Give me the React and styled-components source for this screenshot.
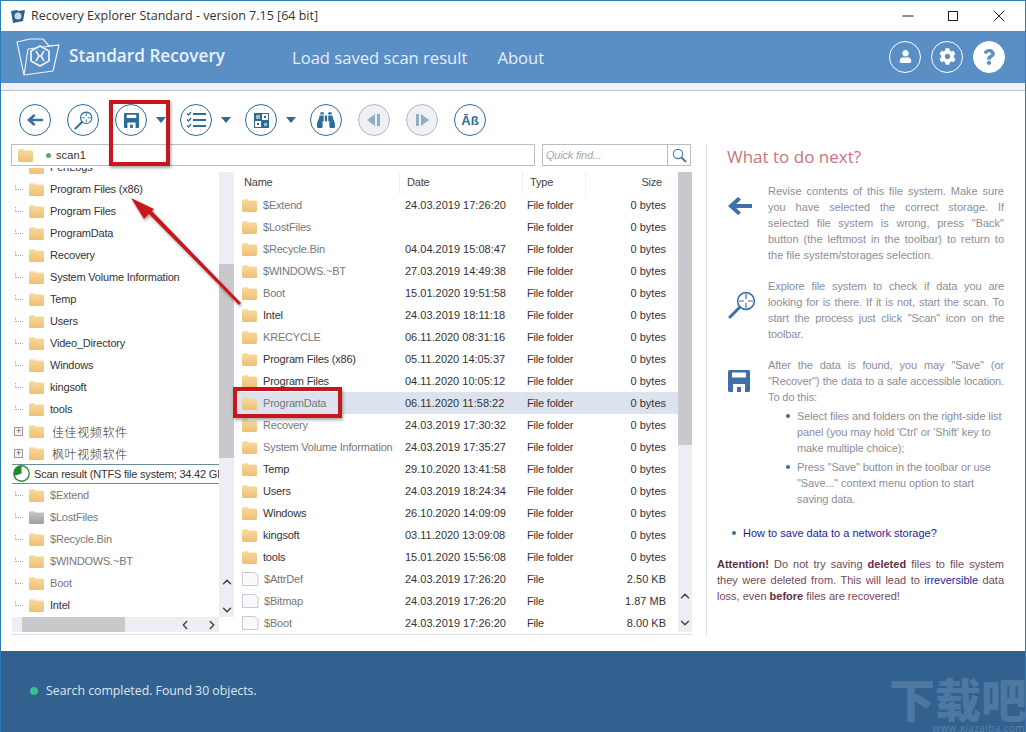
import React from 'react'
import styled, { createGlobalStyle } from 'styled-components'
import { FaUser, FaCog, FaQuestion, FaBinoculars } from 'react-icons/fa'
import { ChevronUp, ChevronDown, ChevronLeft, ChevronRight, Minus, X } from 'lucide-react'

const Global = createGlobalStyle`
    html, body { margin: 0; background: #fff; }
    * { box-sizing: border-box; }
`

const Window = styled.div`
    position: relative;
    width: 1026px;
    height: 732px;
    overflow: hidden;
    display: flex;
    flex-direction: column;
    border: 1px solid #2d7db5;
    border-bottom: 0;
    background: #fff;
    font-family: "Liberation Sans", "Noto Sans CJK SC", sans-serif;
    font-size: 11px;
    letter-spacing: -0.2px;
    color: #333;
`
const TitleBar = styled.div`
    height: 30px;
    display: flex;
    align-items: center;
    padding-left: 9px;
    font-family: "Open Sans", sans-serif;
    font-size: 12.5px;
    letter-spacing: 0;
    color: #333;
`
const TitleText = styled.span`
    margin-left: 5px;
    margin-top: -2px;
`
const WinControls = styled.div`
    margin-left: auto;
    display: flex;
    align-items: center;
    padding-right: 16px;
    gap: 31px;
    color: #222;
`
const MaxBox = styled.div`
    width: 10px;
    height: 10px;
    border: 1px solid #222;
`
const Header = styled.div`
    height: 52px;
    display: flex;
    align-items: center;
    background: #5a8fc6;
    color: #fff;
    padding: 0 15px;
    font-family: "Open Sans", sans-serif;
    letter-spacing: 0;
`
const Brand = styled.div`
    margin-left: 7px;
    margin-right: 66px;
    width: 157px;
    font-size: 17.2px;
    font-weight: 600;
    white-space: nowrap;
    color: #e9f0f8;
    margin-top: -4px;
`
const NavLink = styled.a`
    font-size: 16.6px;
    color: #e6eef7;
    margin-right: 30px;
    white-space: nowrap;
    margin-top: 1px;
`
const HeaderIcons = styled.div`
    margin-left: auto;
    display: flex;
    gap: 10px;
    padding-right: 5px;
    margin-top: -1px;
`
const HeaderCircle = styled.div`
    width: 32px;
    height: 32px;
    border-radius: 50%;
    border: 1px solid #fff;
    background: ${p => (p.$filled ? '#fff' : 'transparent')};
    color: ${p => (p.$filled ? '#5a8fc6' : '#fff')};
    display: flex;
    align-items: center;
    justify-content: center;
`
const Strip = styled.div`
    height: 8px;
    background: #f0f1f6;
    border-bottom: 1px solid #c4c4c8;
`
const Toolbar = styled.div`
    height: 53px;
    display: flex;
    align-items: flex-start;
    padding: 13px 0 0 18px;
    gap: 16px;
`
const ToolGroup = styled.div`
    display: flex;
    align-items: center;
    width: ${p => (p.$menu ? '51px' : '32px')};
    margin-right: ${p => (p.$menu ? '-2px' : '0')};
    justify-content: space-between;
`
const ToolButton = styled.div`
    width: 32px;
    height: 32px;
    flex: none;
    border-radius: 50%;
    border: 1px solid ${p => (p.$off ? '#a9bccb' : '#2b6c98')};
    background: ${p => (p.$off ? '#eef0f3' : '#fff')};
    color: ${p => (p.$off ? '#8fafc8' : '#2b6c98')};
    display: flex;
    align-items: center;
    justify-content: center;
    font-weight: 700;
    font-size: 13px;
    letter-spacing: 0;
`
const Caret = styled.div`
    width: 0;
    height: 0;
    border-left: 5px solid transparent;
    border-right: 5px solid transparent;
    border-top: 6px solid #2b6c98;
`
const Main = styled.div`
    flex: 1;
    display: flex;
    min-height: 0;
`
const LeftSide = styled.div`
    margin-left: 10px;
    width: 681px;
    display: flex;
    flex-direction: column;
`
const PathRow = styled.div`
    display: flex;
    gap: 7px;
    height: 22px;
`
const PathBar = styled.div`
    width: 524px;
    border: 1px solid #bdbdbd;
    display: flex;
    align-items: center;
    padding-left: 5px;
    letter-spacing: 0.1px;
`
const GreenDot = styled.span`
    width: 5px;
    height: 5px;
    border-radius: 50%;
    background: #5fa777;
    margin: 0 5px 0 12px;
`
const FindBox = styled.div`
    width: 149px;
    border: 1px solid #bdbdbd;
    display: flex;
    align-items: center;
`
const FindText = styled.div`
    flex: 1;
    font-style: italic;
    color: #a6a6a6;
    padding-left: 3px;
`
const FindButton = styled.div`
    width: 23px;
    height: 100%;
    border-left: 1px solid #bdbdbd;
    display: flex;
    align-items: center;
    justify-content: center;
`
const Panes = styled.div`
    margin-top: 2px;
    height: 467px;
    display: flex;
    border-bottom: 1px solid #dedede;
`
const TreePane = styled.div`
    width: 226px;
    padding-left: 1px;
    display: flex;
    flex-direction: column;
`
const TreeTop = styled.div`
    height: 449px;
    display: flex;
`
const TreeRows = styled.div`
    width: 207px;
    overflow: hidden;
`
const TreeRow = styled.div`
    height: 22px;
    display: flex;
    align-items: center;
    white-space: nowrap;
    margin-top: ${p => (p.$clipped ? '-12px' : '0')};
    color: ${p => (p.$muted ? '#777' : '#333')};
`
const Connector = styled.div`
    width: 16px;
    display: flex;
    justify-content: flex-start;
    padding-left: 3px;
`
const Dots = styled.div`
    width: 8px;
    height: 5px;
    border-left: 1px dotted #aaa;
    border-bottom: 1px dotted #aaa;
    margin-top: -3px;
`
const PlusBox = styled.div`
    width: 9px;
    height: 9px;
    margin-left: -1px;
    border: 1px solid #999;
    background: #f4f4f4;
    display: flex;
    align-items: center;
    justify-content: center;
    color: #555;
    font-size: 9px;
    line-height: 7px;
    font-family: "Liberation Sans", sans-serif;
`
const TreeLabel = styled.span`
    margin-left: ${p => (p.$cjk ? '7px' : '5px')};
    font-size: ${p => (p.$cjk ? '12px' : '11px')};
    font-weight: ${p => (p.$cjk ? 300 : 400)};
    letter-spacing: ${p => (p.$cjk ? '0.6px' : '-0.2px')};
`
const ScanRow = styled.div`
    height: 20px;
    display: flex;
    align-items: center;
    gap: 4px;
    padding: 0 0 1px 1px;
    border-top: 1px solid #6d8a99;
    border-bottom: 1px solid #6d8a99;
    white-space: nowrap;
    overflow: hidden;
    color: #333;
`
const VScroll = styled.div`
    width: ${p => p.$w || 15}px;
    margin-top: 4px;
    background: #eceef3;
    display: flex;
    flex-direction: column;
    align-items: center;
    height: ${p => p.$h}px;
`
const VThumb = styled.div`
    width: 100%;
    background: #c9c9cd;
    margin-top: ${p => p.$top}px;
    height: ${p => p.$len}px;
`
const ScrollArrows = styled.div`
    margin-top: auto;
    display: flex;
    flex-direction: column;
    gap: ${p => p.$gap}px;
    padding-bottom: ${p => p.$pad}px;
    color: #444;
`
const HScroll = styled.div`
    width: 207px;
    height: 15px;
    background: #eceef3;
    display: flex;
    align-items: center;
    color: #444;
`
const HThumb = styled.div`
    width: 103px;
    height: 100%;
    margin-left: 10px;
    background: #c9c9cd;
`
const HArrows = styled.div`
    margin-left: auto;
    display: flex;
    gap: 13px;
`
const ListPane = styled.div`
    margin-left: 3px;
    width: 455px;
    display: flex;
    height: 465px;
`
const ListBody = styled.div`
    width: 441px;
    overflow: hidden;
`
const Columns = styled.div`
    display: grid;
    grid-template-columns: 163px 123px 63px 92px;
    align-items: center;
`
const HeadRow = styled(Columns)`
    height: 26px;
    padding-top: 4px;
    color: #444;
`
const HeadCell = styled.div`
    height: 22px;
    line-height: 20px;
    padding-left: ${p => (p.$right ? '0' : p.$pad)}px;
    padding-right: ${p => (p.$right ? '16px' : '0')};
    text-align: ${p => (p.$right ? 'right' : 'left')};
    border-right: ${p => (p.$right ? '0' : '1px solid #efeff2')};
`
const FileRow = styled(Columns)`
    height: 22px;
    line-height: 20px;
    background: ${p => (p.$selected ? '#dde3ee' : 'transparent')};
`
const NameCell = styled.div`
    display: flex;
    align-items: center;
    gap: 5px;
    padding-left: 4px;
    white-space: nowrap;
    color: ${p => (p.$muted ? '#777' : '#333')};
`
const DateCell = styled.div`
    padding-left: 5px;
    white-space: nowrap;
    letter-spacing: 0;
`
const TypeCell = styled.div`
    padding-left: 4px;
`
const SizeCell = styled.div`
    text-align: right;
    padding-right: 12px;
    letter-spacing: 0;
`
const Help = styled.div`
    margin-left: 14px;
    width: 300px;
    height: 492px;
    border-left: 1px solid #e2e2e2;
    padding: 3px 0 0 10px;
    color: #8b8e9a;
    line-height: 16px;
    letter-spacing: 0;
`
const HelpTitle = styled.div`
    margin-left: 10px;
    font-family: "Open Sans", sans-serif;
    font-size: 17px;
    line-height: 20px;
    color: #c8747c;
`
const HelpBlock = styled.div`
    display: flex;
    margin-top: ${p => p.$top}px;
    letter-spacing: ${p => (p.$tight ? '-0.1px' : '0')};
`
const HelpIcon = styled.div`
    width: 51px;
    padding: ${p => p.$top}px 0 0 11px;
    flex: none;
`
const HelpText = styled.div`
    width: 236px;
    text-align: justify;
`
const Bullets = styled.ul`
    list-style: none;
    margin: 3px 0 0;
    padding: 0 0 0 29px;
    width: 236px;
`
const BulletItem = styled.li`
    position: relative;
    margin-bottom: 3px;
    &::before {
        content: '';
        position: absolute;
        left: -11px;
        top: 6px;
        width: 4px;
        height: 4px;
        border-radius: 50%;
        background: #3f6f96;
    }
`
const NetLink = styled(BulletItem)`
    margin: 15px 0 0 26px;
    color: #1c1c96;
`
const Attention = styled.div`
    margin-top: 15px;
    width: 287px;
    color: #74485a;
    text-align: justify;
    b { color: #5f2f42; font-weight: 700; }
    a { color: #1c1c96; }
`
const StatusBar = styled.div`
    position: relative;
    height: 81px;
    background: #32618f;
    color: #dfe8f1;
    display: flex;
    align-items: center;
    padding: 0 0 2px 29px;
    font-family: "Open Sans", sans-serif;
    font-size: 12.3px;
    letter-spacing: 0;
    overflow: hidden;
`
const StatusDot = styled.span`
    width: 8px;
    height: 8px;
    border-radius: 50%;
    background: #3cc08e;
    margin-right: 8px;
`
const Watermark = styled.div`
    position: absolute;
    right: -2px;
    top: 20px;
    width: 140px;
    text-align: right;
    font-family: "Noto Sans CJK SC", sans-serif;
    font-weight: 900;
    font-size: 46px;
    line-height: 52px;
    color: rgba(132, 162, 196, 0.34);
    white-space: nowrap;
`
const WatermarkUrl = styled.div`
    position: absolute;
    right: 0;
    top: 71px;
    font-size: 10px;
    line-height: 12px;
    letter-spacing: 0.4px;
    color: rgba(132, 162, 196, 0.5);
`
const RedBox = styled.div`
    position: absolute;
    left: ${p => p.$x}px;
    top: ${p => p.$y}px;
    width: ${p => p.$w}px;
    height: ${p => p.$h}px;
    border: 4px solid #c8161d;
    box-shadow: 1px 2px 3px rgba(0, 0, 0, 0.35);
`
const ArrowLayer = styled.svg`
    position: absolute;
    left: 120px;
    top: 185px;
    pointer-events: none;
`

const Folder = ({ grey }) => {
    const id = grey ? 'fg' : 'fy'
    return (
        <svg width="17" height="15" viewBox="0 0 17 15" style={{ flex: 'none' }}>
            <defs>
                <linearGradient id={id} x1="0" y1="0" x2="0" y2="1">
                    <stop offset="0" stopColor={grey ? '#c9c9cc' : '#f7dba3'} />
                    <stop offset="1" stopColor={grey ? '#9d9da2' : '#eebf72'} />
                </linearGradient>
            </defs>
            <path d="M1 3.2C1 2 1.6 1.2 2.6 1.2h3.6l1.5 1.4h7c.9 0 1.3.6 1.3 1.4v8.6c0 .8-.5 1.4-1.3 1.4H2.3C1.5 14 1 13.5 1 12.6z" fill={`url(#${id})`} />
        </svg>
    )
}

const Page = () => (
    <svg width="18" height="14" viewBox="0 0 18 14" style={{ flex: 'none' }}>
        <path d="M1.5.5h12l3.5 3v10H1.5z" fill="#f9f8fb" stroke="#c9c9cf" />
    </svg>
)

const Logo = () => (
    <svg width="46" height="40" viewBox="0 0 46 40" fill="none" stroke="#eaf1f8" strokeWidth="1.2" strokeLinejoin="round">
        <path d="M1 5L14 2h13l6 7 10-1-6 26-29 4z" />
        <path d="M8 38l4-26 31-4" />
        <path d="M24 9l9 5v10l-9 5-9-5V14z" fill="#5a8fc6" strokeWidth="1.8" />
        <path d="M20 14l3 5-3 5M28 14l-3 5 3 5M23 19h2" strokeWidth="1.6" />
    </svg>
)

const AppIcon = () => (
    <svg width="16" height="14" viewBox="0 0 16 14">
        <path d="M1 2l6-1 1 1 7-1-2 11-10 2z" fill="#2f5f8e" />
        <circle cx="8" cy="7" r="3.5" fill="#c6d8e8" />
    </svg>
)

const BackArrow = ({ size = 24 }) => (
    <svg width={size} height={size * 0.75} viewBox="0 0 24 18" fill="#3f6fa8">
        <path d="M10 0l3 2.5L8.2 7H24v4H8.2l4.8 4.5L10 18 0 9z" />
    </svg>
)

const ScanGlass = ({ size = 28, color = '#3f6fa8' }) => (
    <svg width={size} height={size} viewBox="0 0 28 28" fill="none" stroke={color}>
        <circle cx="18" cy="10" r="8.4" strokeWidth="1.6" />
        <path d="M18 3v5M18 12v5M11 10h5M20 10h5" strokeWidth="1.2" />
        <path d="M11.5 16.5L2 26" strokeWidth="3" strokeLinecap="round" />
    </svg>
)

const Floppy = ({ size = 22, color = '#3f6fa8', bg = '#fff' }) => (
    <svg width={size} height={size} viewBox="0 0 22 22">
        <path d="M0 1.5C0 .7.7 0 1.5 0h19c.8 0 1.5.7 1.5 1.5v19c0 .8-.7 1.5-1.5 1.5h-19C.7 22 0 21.3 0 20.5z" fill={color} />
        <rect x="4" y="2.5" width="14" height="5" rx=".5" fill={bg} />
        <path d="M5 22v-8h12v8z" fill={bg} />
        <rect x="9" y="17" width="4" height="5" fill={color} />
    </svg>
)

const CheckList = () => (
    <svg width="20" height="18" viewBox="0 0 20 18" fill="none" stroke="#2b6c98">
        <path d="M7 3h13M7 9h13M7 15h13" strokeWidth="2" />
        <path d="M1 2.5l1.5 1.5L5 1M1 8.5L2.5 10 5 7M1 14.5L2.5 16 5 13" strokeWidth="1.2" />
    </svg>
)

const TileGrid = () => (
    <svg width="15" height="15" viewBox="0 0 15 15">
        <path d="M0 0h15v15H0z" fill="#2b6c98" />
        <path d="M8 1h6v6H8zM1 8h6v6H1z" fill="#fff" />
        <path d="M2 2h4v4H2zM10 10h3v3h-3z" fill="#9cb9cf" />
        <path d="M10 3h2v2h-2zM3 10h2v2H3z" fill="#2b6c98" />
    </svg>
)

const StepBack = () => (
    <svg width="14" height="14" viewBox="0 0 14 14" fill="#8fafc8">
        <path d="M8 1L0 7l8 6zM10 1h3v12h-3z" />
    </svg>
)

const StepNext = () => (
    <svg width="14" height="14" viewBox="0 0 14 14" fill="#8fafc8">
        <path d="M1 1h3v12H1zM6 1l8 6-8 6z" />
    </svg>
)

const FindGlass = () => (
    <svg width="15" height="15" viewBox="0 0 15 15" fill="none" stroke="#3f78a6">
        <circle cx="6" cy="6" r="4.6" strokeWidth="1.1" />
        <path d="M9.5 9.5L14 14" strokeWidth="2" />
    </svg>
)

const ScanPie = () => (
    <svg width="17" height="17" viewBox="0 0 17 17" style={{ flex: 'none' }}>
        <circle cx="8.5" cy="8.5" r="7.7" fill="#fff" stroke="#2c8a3e" strokeWidth="1.4" />
        <path d="M8.5 8.5V1A7.5 7.5 0 0 0 1.4 11z" fill="#1f8a35" />
    </svg>
)

const treeRows = [
    { name: 'PerfLogs', clipped: true },
    { name: 'Program Files (x86)' },
    { name: 'Program Files' },
    { name: 'ProgramData' },
    { name: 'Recovery' },
    { name: 'System Volume Information' },
    { name: 'Temp' },
    { name: 'Users' },
    { name: 'Video_Directory' },
    { name: 'Windows' },
    { name: 'kingsoft' },
    { name: 'tools' },
    { name: '佳佳视频软件', plus: true },
    { name: '枫叶视频软件', plus: true },
]

const scanRows = [
    { name: '$Extend', muted: true },
    { name: '$LostFiles', muted: true, grey: true },
    { name: '$Recycle.Bin', muted: true },
    { name: '$WINDOWS.~BT', muted: true },
    { name: 'Boot', muted: true },
    { name: 'Intel' },
]

const files = [
    ['$Extend', '24.03.2019 17:26:20', 'File folder', '0 bytes', true],
    ['$LostFiles', '', 'File folder', '0 bytes', true],
    ['$Recycle.Bin', '04.04.2019 15:08:47', 'File folder', '0 bytes', true],
    ['$WINDOWS.~BT', '27.03.2019 14:49:38', 'File folder', '0 bytes', true],
    ['Boot', '15.01.2020 19:51:58', 'File folder', '0 bytes', true],
    ['Intel', '24.03.2019 18:11:18', 'File folder', '0 bytes'],
    ['KRECYCLE', '06.11.2020 08:31:16', 'File folder', '0 bytes', true],
    ['Program Files (x86)', '05.11.2020 14:05:37', 'File folder', '0 bytes'],
    ['Program Files', '04.11.2020 10:05:12', 'File folder', '0 bytes'],
    ['ProgramData', '06.11.2020 11:58:22', 'File folder', '0 bytes', true],
    ['Recovery', '24.03.2019 17:30:32', 'File folder', '0 bytes', true],
    ['System Volume Information', '24.03.2019 17:35:27', 'File folder', '0 bytes', true],
    ['Temp', '29.10.2020 13:41:58', 'File folder', '0 bytes'],
    ['Users', '24.03.2019 18:24:34', 'File folder', '0 bytes'],
    ['Windows', '26.10.2020 14:09:09', 'File folder', '0 bytes'],
    ['kingsoft', '03.11.2020 13:09:08', 'File folder', '0 bytes'],
    ['tools', '15.01.2020 15:56:08', 'File folder', '0 bytes'],
    ['$AttrDef', '24.03.2019 17:26:20', 'File', '2.50 KB', true],
    ['$Bitmap', '24.03.2019 17:26:20', 'File', '1.87 MB', true],
    ['$Boot', '24.03.2019 17:26:20', 'File', '8.00 KB', true],
]

function Tree({ rows }) {
    return rows.map(row => (
        <TreeRow key={row.name} $clipped={row.clipped} $muted={row.muted}>
            <Connector>{row.plus ? <PlusBox>+</PlusBox> : <Dots />}</Connector>
            <Folder grey={row.grey} />
            <TreeLabel $cjk={row.plus}>{row.name}</TreeLabel>
        </TreeRow>
    ))
}

function App() {
    return (
        <Window>
            <Global />
            <TitleBar>
                <AppIcon />
                <TitleText>Recovery Explorer Standard - version 7.15 [64 bit]</TitleText>
                <WinControls>
                    <Minus size={18} strokeWidth={1.4} />
                    <MaxBox />
                    <X size={20} strokeWidth={1.2} />
                </WinControls>
            </TitleBar>
            <Header>
                <Logo />
                <Brand>Standard Recovery</Brand>
                <NavLink>Load saved scan result</NavLink>
                <NavLink>About</NavLink>
                <HeaderIcons>
                    <HeaderCircle><FaUser size={13} /></HeaderCircle>
                    <HeaderCircle><FaCog size={17} /></HeaderCircle>
                    <HeaderCircle $filled><FaQuestion size={16} /></HeaderCircle>
                </HeaderIcons>
            </Header>
            <Strip />
            <Toolbar>
                <ToolGroup><ToolButton><BackArrow size={16} /></ToolButton></ToolGroup>
                <ToolGroup><ToolButton><ScanGlass size={19} color="#2b6c98" /></ToolButton></ToolGroup>
                <ToolGroup $menu><ToolButton><Floppy size={15} color="#2b6c98" /></ToolButton><Caret /></ToolGroup>
                <ToolGroup $menu><ToolButton><CheckList /></ToolButton><Caret /></ToolGroup>
                <ToolGroup $menu><ToolButton><TileGrid /></ToolButton><Caret /></ToolGroup>
                <ToolGroup><ToolButton><FaBinoculars size={18} /></ToolButton></ToolGroup>
                <ToolGroup><ToolButton $off><StepBack /></ToolButton></ToolGroup>
                <ToolGroup><ToolButton $off><StepNext /></ToolButton></ToolGroup>
                <ToolGroup><ToolButton>Āß</ToolButton></ToolGroup>
            </Toolbar>
            <Main>
                <LeftSide>
                    <PathRow>
                        <PathBar>
                            <Folder />
                            <GreenDot />
                            scan1
                        </PathBar>
                        <FindBox>
                            <FindText>Quick find...</FindText>
                            <FindButton><FindGlass /></FindButton>
                        </FindBox>
                    </PathRow>
                    <Panes>
                        <TreePane>
                            <TreeTop>
                                <TreeRows>
                                    <Tree rows={treeRows} />
                                    <ScanRow>
                                        <ScanPie />
                                        Scan result (NTFS file system; 34.42 GB)
                                    </ScanRow>
                                    <Tree rows={scanRows} />
                                </TreeRows>
                                <VScroll $h={445}>
                                    <VThumb $top={92} $len={194} />
                                    <ScrollArrows $gap={14} $pad={0}>
                                        <ChevronUp size={14} strokeWidth={2.5} />
                                        <ChevronDown size={14} strokeWidth={2.5} />
                                    </ScrollArrows>
                                </VScroll>
                            </TreeTop>
                            <HScroll>
                                <HThumb />
                                <HArrows>
                                    <ChevronLeft size={14} strokeWidth={2.5} />
                                    <ChevronRight size={14} strokeWidth={2.5} />
                                </HArrows>
                            </HScroll>
                        </TreePane>
                        <ListPane>
                            <ListBody>
                                <HeadRow>
                                    <HeadCell $pad={7}>Name</HeadCell>
                                    <HeadCell $pad={7}>Date</HeadCell>
                                    <HeadCell $pad={7}>Type</HeadCell>
                                    <HeadCell $right>Size</HeadCell>
                                </HeadRow>
                                {files.map(([name, date, type, size, muted]) => (
                                    <FileRow key={name} $selected={name === 'ProgramData'}>
                                        <NameCell $muted={muted}>
                                            {type === 'File' ? <Page /> : <Folder />}
                                            {name}
                                        </NameCell>
                                        <DateCell>{date}</DateCell>
                                        <TypeCell>{type}</TypeCell>
                                        <SizeCell>{size}</SizeCell>
                                    </FileRow>
                                ))}
                            </ListBody>
                            <VScroll $w={14} $h={460}>
                                <VThumb $top={0} $len={273} />
                                <ScrollArrows $gap={13} $pad={2}>
                                    <ChevronUp size={14} strokeWidth={2.5} />
                                    <ChevronDown size={14} strokeWidth={2.5} />
                                </ScrollArrows>
                            </VScroll>
                        </ListPane>
                    </Panes>
                </LeftSide>
                <Help>
                    <HelpTitle>What to do next?</HelpTitle>
                    <HelpBlock $top={16}>
                        <HelpIcon $top={14}><BackArrow /></HelpIcon>
                        <HelpText>
                            Revise contents of this file system. Make sure you have selected the correct storage. If selected file system is wrong, press "Back" button (the leftmost in the toolbar) to return to the file system/storages selection.
                        </HelpText>
                    </HelpBlock>
                    <HelpBlock $top={15} $tight>
                        <HelpIcon $top={13}><ScanGlass /></HelpIcon>
                        <HelpText>
                            Explore file system to check if data you are looking for is there. If it is not, start the scan. To start the process just click "Scan" icon on the toolbar.
                        </HelpText>
                    </HelpBlock>
                    <HelpBlock $top={15} $tight>
                        <HelpIcon $top={13}><Floppy /></HelpIcon>
                        <div>
                            <HelpText>
                                After the data is found, you may "Save" (or "Recover") the data to a safe accessible location. To do this:
                            </HelpText>
                            <Bullets>
                                <BulletItem>Select files and folders on the right-side list panel (you may hold 'Ctrl' or 'Shift' key to make multiple choice);</BulletItem>
                                <BulletItem>Press "Save" button in the toolbar or use "Save..." context menu option to start saving data.</BulletItem>
                            </Bullets>
                        </div>
                    </HelpBlock>
                    <NetLink as="div">How to save data to a network storage?</NetLink>
                    <Attention>
                        <b>Attention!</b> Do not try saving <b>deleted</b> files to file system they were deleted from. This will lead to <a>irreversible</a> data loss, even <b>before</b> files are recovered!
                    </Attention>
                </Help>
            </Main>
            <StatusBar>
                <StatusDot />
                Search completed. Found 30 objects.
                <Watermark>下载吧</Watermark>
                <WatermarkUrl>www.xiazaiba.com</WatermarkUrl>
            </StatusBar>
            <RedBox $x={108} $y={99} $w={61} $h={66} />
            <RedBox $x={232} $y={386} $w={109} $h={31} />
            <ArrowLayer width="130" height="130" viewBox="0 0 130 130">
                <defs>
                    <filter id="arrowShadow" x="-10%" y="-10%" width="130%" height="130%">
                        <feDropShadow dx="1" dy="2" stdDeviation="1.5" floodOpacity="0.35" />
                    </filter>
                </defs>
                <g filter="url(#arrowShadow)" fill="#c8161d">
                    <path d="M118 119L26 26l3-3 91 94z" />
                    <path d="M10 12l23 11-10 10z" />
                </g>
            </ArrowLayer>
        </Window>
    )
}

export default App
